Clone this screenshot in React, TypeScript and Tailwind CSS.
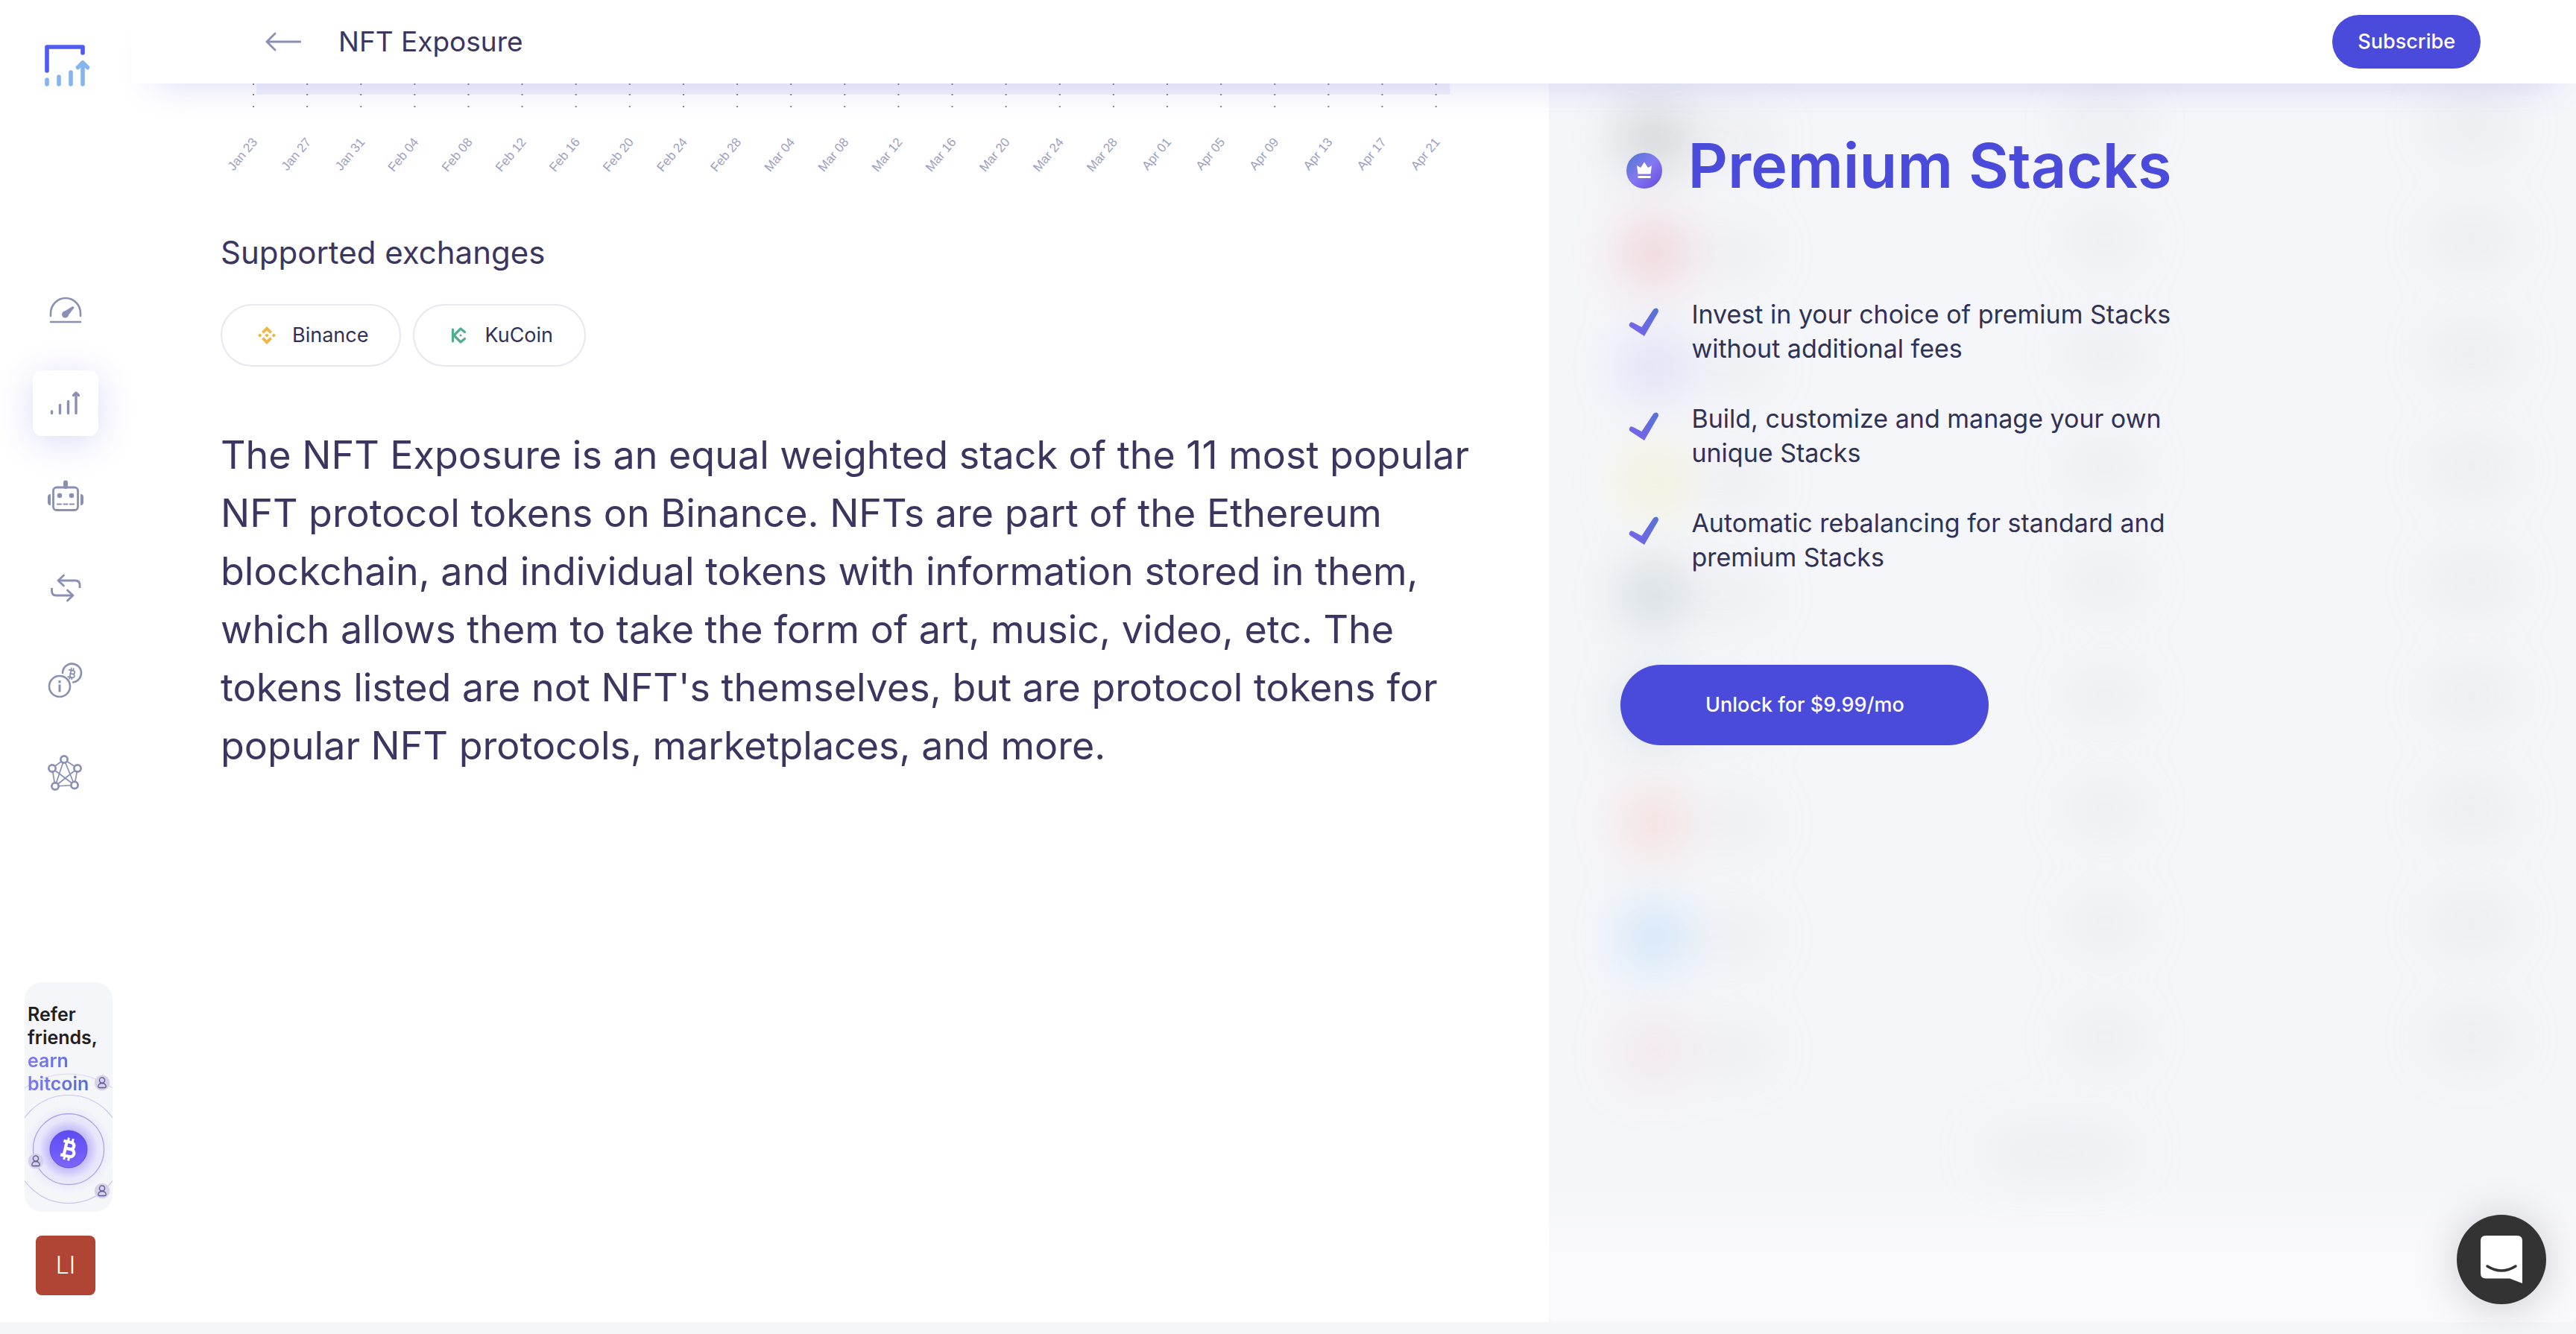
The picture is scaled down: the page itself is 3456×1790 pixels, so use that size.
import React from "react";

const dates = [
  "Jan 23", "Jan 27", "Jan 31", "Feb 04", "Feb 08", "Feb 12", "Feb 16", "Feb 20",
  "Feb 24", "Feb 28", "Mar 04", "Mar 08", "Mar 12", "Mar 16", "Mar 20", "Mar 24",
  "Mar 28", "Apr 01", "Apr 05", "Apr 09", "Apr 13", "Apr 17", "Apr 21",
];

const blurredRows = [
  "bg-[#6e6e74]", "bg-[#e06a72]", "bg-[#a59bf0]", "bg-[#f2e27a]", "bg-[#6f9091]",
  "bg-[#6f9a9c]", "bg-[#f79a80]", "bg-[#62b4f5]", "bg-[#e9b3bb]",
];

const features = [
  ["Invest in your choice of premium Stacks", "without additional fees"],
  ["Build, customize and manage your own", "unique Stacks"],
  ["Automatic rebalancing for standard and", "premium Stacks"],
];

function Logo() {
  return (
    <svg viewBox="0 0 62 56" className="w-[62px] h-14" fill="none" strokeWidth="5.6" strokeLinecap="round" strokeLinejoin="round">
      <path d="M3 35V3H51V11" stroke="#4f5cf0" />
      <path d="M3 47V53M19 43V53M35 37V53M51 25V53M44.500 30.500L51 24L57.500 30.500" stroke="#86b4ef" />
    </svg>
  );
}

const stroke = { fill: "none", stroke: "#8a90b4", strokeLinecap: "round" as const, strokeLinejoin: "round" as const };

function Gauge() {
  return (
    <svg viewBox="0 0 48 48" className="size-12" {...stroke} strokeWidth="2.600">
      <path d="M4 31V27.500A20 20.500 0 0 1 44 27.500V31M4 39H44" />
      <circle cx="23.500" cy="29" r="4.500" fill="#8a90b4" stroke="none" />
      <path d="M20.500 26L33.500 18L35.800 19.500L27 31Z" fill="#8a90b4" stroke="none" />
    </svg>
  );
}

function Stacks() {
  return (
    <svg viewBox="0 0 48 48" className="size-12" {...stroke} strokeWidth="3.400">
      <path d="M5.500 35V37.500M16.500 26.500V37.500M27.500 21.500V37.500M38 12V37.500M34.500 13.500L38 10L41.500 13.500" />
    </svg>
  );
}

function Robot() {
  return (
    <svg viewBox="0 0 48 48" className="size-12" {...stroke} strokeWidth="2.800">
      <rect x="7.500" y="13" width="33" height="30.500" rx="4.500" />
      <path d="M24 6.500V12" strokeWidth="6" />
      <path d="M4 22Q0 22 0 26V33Q0 37 4 37ZM44 22Q48 22 48 26V33Q48 37 44 37Z" fill="#8a90b4" stroke="none" />
      <circle cx="16" cy="24" r="3.300" fill="#8a90b4" stroke="none" />
      <circle cx="32" cy="24" r="3.300" fill="#8a90b4" stroke="none" />
      <path d="M13 35.500H18M21.500 35.500H26.500M30 35.500H35" strokeWidth="2.200" />
    </svg>
  );
}

function Swap() {
  return (
    <svg viewBox="0 0 48 48" className="size-12" {...stroke} strokeWidth="2.800" strokeLinecap="butt">
      <path d="M43 24V20Q43 14 37 14H14M5.500 24V28Q5.500 34 11.500 34H34" />
      <path d="M21.500 7L14 14L21.500 21M26.500 27L34 34L26.500 41" strokeLinecap="round" />
    </svg>
  );
}

function Coins() {
  return (
    <svg viewBox="0 0 48 48" className="size-12" {...stroke} strokeWidth="2.600">
      <circle cx="16" cy="32" r="14" />
      <path d="M20 14A12.500 12.500 0 1 1 34 26.500" />
      <path d="M16 29.500V39.500M16 24V27.500" strokeWidth="3" strokeLinecap="butt" />
      <g transform="rotate(10 32 15)" strokeWidth="1.800">
        <path d="M28 10.500H33.500A2.300 2.300 0 0 1 33.500 15.200H30M30 15.200H34.500A2.500 2.500 0 0 1 34.500 20H28M30.500 10.500V20M30.500 7.800V10M33.500 7.800V10M30.500 20V22.300M33.500 20V22.300" />
      </g>
    </svg>
  );
}

function Network() {
  const nodes = [[22, 6], [40, 18], [36, 40.5], [10, 42], [6, 18]];
  return (
    <svg viewBox="0 0 48 48" className="size-12" {...stroke} strokeWidth="1.700">
      <path d="M22 6L40 18L36 40.500L10 42L6 18ZM22 6L36 40.500L6 18M22 6L10 42L40 18" />
      {nodes.map(([x, y]) => (
        <circle key={`${x}-${y}`} cx={x} cy={y} r="4.600" fill="#fff" strokeWidth="2.700" />
      ))}
    </svg>
  );
}

const nav = [
  { label: "Dashboard", icon: Gauge, active: false },
  { label: "Stacks", icon: Stacks, active: true },
  { label: "Bots", icon: Robot, active: false },
  { label: "Swap", icon: Swap, active: false },
  { label: "Coins", icon: Coins, active: false },
  { label: "Network", icon: Network, active: false },
];

function Person({ x, y }: { x: number; y: number }) {
  return (
    <g transform={`translate(${x} ${y})`}>
      <circle r="10.300" fill="#d6d1e9" />
      <circle cy="-3.500" r="3.600" fill="none" stroke="#5b5795" strokeWidth="1.300" />
      <path d="M-5.200 5C-5.200 -1 5.200 -1 5.200 5Q5.200 6.500 3.500 6.500H-3.500Q-5.200 6.500 -5.200 5Z" fill="none" stroke="#5b5795" strokeWidth="1.300" />
    </g>
  );
}

function ReferArt() {
  return (
    <svg viewBox="0 0 118 196" className="absolute inset-x-0 bottom-0 w-full" fill="none">
      <defs>
        <radialGradient id="glow">
          <stop offset="0.400" stopColor="#6a55fa" stopOpacity="0.400" />
          <stop offset="0.650" stopColor="#6a55fa" stopOpacity="0.110" />
          <stop offset="1" stopColor="#6a55fa" stopOpacity="0" />
        </radialGradient>
        <linearGradient id="coin" x1="0" y1="0" x2="0" y2="1">
          <stop stopColor="#5e4bf3" />
          <stop offset="1" stopColor="#7b66fa" />
        </linearGradient>
      </defs>
      <circle cx="59" cy="112" r="60" fill="url(#glow)" />
      <circle cx="59" cy="112" r="101" stroke="#dcd8f6" strokeWidth="1.200" />
      <circle cx="59" cy="112" r="72.500" stroke="#cbc5f4" strokeWidth="1.200" />
      <circle cx="59" cy="112" r="47.500" stroke="#aba1f0" strokeWidth="1.300" />
      <circle cx="59" cy="112" r="25" fill="url(#coin)" stroke="#5441d8" strokeWidth="0.800" />
      <g transform="translate(59 112) rotate(13)" stroke="#fff" strokeWidth="4.200">
        <path d="M-9 -9.500H2.500A4.600 4.600 0 0 1 2.500 -0.500H-4M-4 -0.500H3.500A5 5 0 0 1 3.500 9.500H-9M-4.500 -9.500V9.500" />
        <path d="M-3 -15V-9M3 -15V-9M-3 9V15M3 9V15" strokeWidth="3" />
      </g>
      <Person x={104} y={23} />
      <Person x={15} y={128} />
      <Person x={104} y={168} />
    </svg>
  );
}

function Sidebar() {
  return (
    <aside className="relative flex w-44 shrink-0 flex-col items-center bg-white pt-[60px] pb-9">
      <a href="#home" aria-label="Home" className="ml-[6px]"><Logo /></a>
      <nav className="mt-[257px] flex flex-col gap-9">
        {nav.map(({ label, icon: Icon, active }) => (
          <a
            key={label}
            href={`#${label}`}
            aria-label={label}
            className={
              active
                ? "flex size-[88px] items-center justify-center rounded-xl bg-white shadow-[0_8px_48px_rgba(74,74,217,0.200)]"
                : "flex size-[88px] items-center justify-center"
            }
          >
            <Icon />
          </a>
        ))}
      </nav>
      <a href="#refer" className="relative mt-auto ml-2 h-[308px] w-[118px] overflow-hidden rounded-3xl bg-[#f5f6fa] pt-7 pl-1 text-[25px] leading-[31px] font-semibold text-[#1f2021]">
        <ReferArt />
        <span className="relative block">Refer friends,</span>
        <span className="relative block w-[88px] bg-linear-to-r from-[#7f78f5] to-[#4c70c8] bg-clip-text text-transparent">earn bitcoin</span>
      </a>
      <button className="mt-8 size-20 rounded-lg bg-[#b04435] text-[32px] font-light text-white">LI</button>
    </aside>
  );
}

function Header() {
  return (
    <header className="relative z-10 flex h-28 items-center bg-white pr-32 pl-[180px] shadow-[0_32px_48px_-32px_rgba(74,74,200,0.220)]">
      <button aria-label="Back">
        <svg viewBox="0 0 48 28" className="h-7 w-12" {...stroke} strokeWidth="2.800">
          <path d="M47 14H2M13 3L2 14L13 25" />
        </svg>
      </button>
      <h1 className="ml-[50px] text-[37px] leading-[48px] text-[#3c3560]">NFT Exposure</h1>
      <button className="ml-auto h-[72px] rounded-full bg-[#4a4adb] px-[34px] text-[27px] font-medium text-white">Subscribe</button>
    </header>
  );
}

function Chart() {
  return (
    <svg viewBox="0 0 1660 140" className="-mt-px block w-full overflow-visible">
      <rect x="48" y="0" width="1601" height="16" fill="#f2f2fc" />
      {dates.map((d, i) => {
        const x = 44 + i * 72.1;
        return (
          <g key={d}>
            <path d={`M${x} 1v2M${x} 15v2M${x} 31v2`} stroke="#85858f" strokeWidth="2" />
            <text transform={`translate(${x + 6} 80) rotate(-50)`} textAnchor="end" fontSize="17" fill="#9ba0c4" className="font-['Liberation_Sans',sans-serif]">{d}</text>
          </g>
        );
      })}
    </svg>
  );
}

function Binance() {
  return (
    <svg viewBox="0 0 24 24" className="size-6" fill="#ecb742">
      <path d="M12 0L19 7L16.300 9.700L12 5.400L7.700 9.700L5 7ZM12 24L5 17L7.700 14.300L12 18.600L16.300 14.300L19 17ZM12 9.200L14.800 12L12 14.800L9.200 12ZM2.700 9.300L5.400 12L2.700 14.700L0 12ZM21.300 9.300L24 12L21.300 14.700L18.600 12Z" />
    </svg>
  );
}

function KuCoin() {
  return (
    <svg viewBox="0 0 24 24" className="size-6" fill="none" stroke="#4fae90" strokeWidth="3.200" strokeLinecap="round" strokeLinejoin="round">
      <path d="M3.500 4V20M19.500 7.500L14 3L5 12L14 21L19.500 16.500" />
      <path d="M14 10.200L15.800 12L14 13.800L12.200 12Z" fill="#4fae90" stroke="none" />
    </svg>
  );
}

function Details() {
  return (
    <section className="bg-white pr-[122px] pl-[120px] text-[#3c3560]">
      <Chart />
      <h2 className="mt-16 text-[42px] leading-[48px]">Supported exchanges</h2>
      <ul className="mt-[45px] flex gap-4 text-[27px] text-[#2f3157]">
        <li className="flex h-[84px] items-center gap-[22px] rounded-[42px] border-2 border-[#e6e8f0] pr-[42px] pl-12"><Binance />Binance</li>
        <li className="flex h-[84px] items-center gap-[22px] rounded-[42px] border-2 border-[#e6e8f0] pr-[42px] pl-12"><KuCoin />KuCoin</li>
      </ul>
      <p className="mt-20 text-[52px] leading-[78px] whitespace-nowrap">
        The NFT Exposure is an equal weighted stack of the 11 most popular<br />
        NFT protocol tokens on Binance. NFTs are part of the Ethereum<br />
        blockchain, and individual tokens with information stored in them,<br />
        which allows them to take the form of art, music, video, etc. The<br />
        tokens listed are not NFT's themselves, but are protocol tokens for<br />
        popular NFT protocols, marketplaces, and more.
      </p>
    </section>
  );
}

function BlurredHoldings() {
  return (
    <div aria-hidden="true" className="absolute inset-0 overflow-hidden rounded-b-lg bg-linear-to-b from-[#f5f6fa] from-89% to-[#fafafc] to-95%">
      <div className="flex flex-col gap-[77px] pt-9 pr-[84px] pl-[100px] opacity-35 blur-[36px]">
        {blurredRows.map((color, i) => (
          <div key={i} className="flex h-[76px] items-center">
            <div className={`size-[80px] rounded-full ${color}`} />
            <div className="ml-7 h-9 w-20 rounded bg-[#c4c4cc]" />
            <div className="mr-[404px] mb-9 ml-auto h-11 w-20 rounded bg-[#c8c8d0]" />
            <div className="mr-2 mb-9 h-11 w-24 rounded bg-[#c4c4cc]" />
          </div>
        ))}
        <div className="ml-[490px] h-10 w-48 rounded bg-[#d0d0d8]" />
      </div>
    </div>
  );
}

function Check() {
  return (
    <svg viewBox="0 0 40 38" className="mt-[14px] h-[38px] w-10 shrink-0" fill="none">
      <defs>
        <linearGradient id="check" x1="0" y1="1" x2="1" y2="0">
          <stop stopColor="#7a62ee" />
          <stop offset="1" stopColor="#5573d6" />
        </linearGradient>
      </defs>
      <path d="M1 22Q2 18 6 20L17.500 26L33 2.500Q36 -1 39 1.500Q41 4 39 7L21 38L2.500 26Q0 24 1 22Z" fill="url(#check)" />
    </svg>
  );
}

function Crown() {
  return (
    <svg viewBox="0 0 48 48" className="mt-[14px] size-12 shrink-0">
      <defs>
        <linearGradient id="crown" x1="0.100" y1="0.100" x2="0.900" y2="1">
          <stop stopColor="#5578d4" />
          <stop offset="0.450" stopColor="#8578f2" />
          <stop offset="1" stopColor="#6a4ddf" />
        </linearGradient>
      </defs>
      <circle cx="24" cy="24" r="24" fill="url(#crown)" />
      <path d="M14 17L19 20L24 12.500L29 20L34 17L32.500 28.500H15.500ZM15.500 31H32.500V34H15.500Z" fill="#fff" />
    </svg>
  );
}

function Premium() {
  return (
    <section className="relative">
      <BlurredHoldings />
      <div className="relative pt-14 pl-24">
        <h2 className="ml-2 flex items-center gap-[34px] text-[83px] leading-[108px] font-semibold text-[#4a4adb]">
          <Crown />Premium Stacks
        </h2>
        <ul className="mt-[123px] ml-[11px] flex flex-col gap-12 text-[34px] leading-[46px] text-[#2f3157]">
          {features.map(([first, second]) => (
            <li key={first} className="flex gap-11">
              <Check />
              <span>{first}<br />{second}</span>
            </li>
          ))}
        </ul>
        <button className="mt-[121px] h-[108px] w-[494px] rounded-full bg-[#4a4adb] text-[27px] font-medium text-white">Unlock for $9.99/mo</button>
      </div>
    </section>
  );
}

export default function App() {
  return (
    <div className="flex min-h-screen bg-[#f5f6fa] pb-4 font-['Inter',sans-serif]">
      <Sidebar />
      <main className="flex grow flex-col">
        <Header />
        <div className="grid grow grid-cols-[minmax(0,58fr)_minmax(0,42fr)]">
          <Details />
          <Premium />
        </div>
      </main>
      <button aria-label="Open chat" className="fixed right-10 bottom-10 z-20 flex size-[120px] items-center justify-center rounded-full bg-[#333] shadow-[0_4px_60px_rgba(0,0,0,0.200)]">
        <svg viewBox="0 0 56 64" className="h-16 w-14">
          <path d="M7 0H49Q56 0 56 7V64L39 57.500H7Q0 57.500 0 50.500V7Q0 0 7 0Z" fill="#fff" />
          <path d="M9 41Q28 53 47 41" fill="none" stroke="#333" strokeWidth="3.500" strokeLinecap="round" />
        </svg>
      </button>
    </div>
  );
}
